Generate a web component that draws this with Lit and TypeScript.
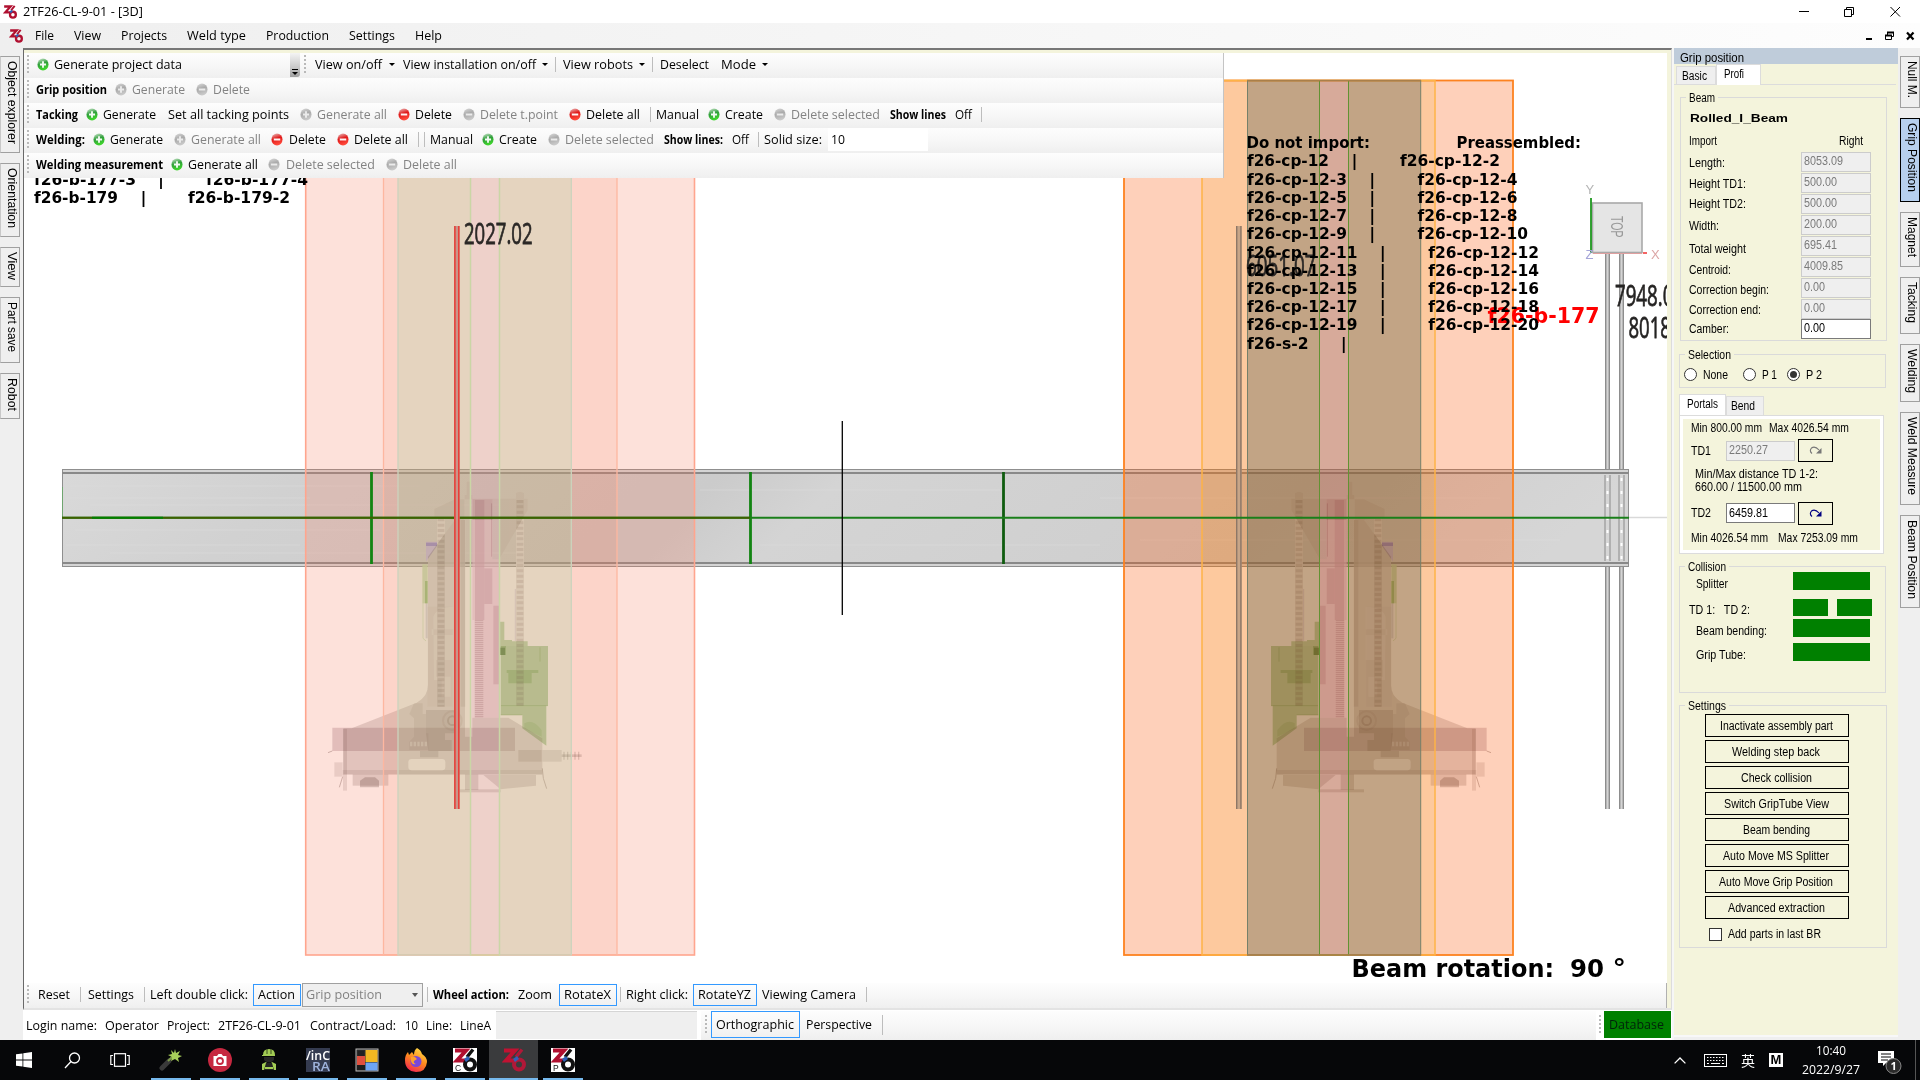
import { LitElement, html, css, svg, nothing } from "lit";
import { customElement, property } from "lit/decorators.js";
import { styleMap } from "lit/directives/style-map.js";

/* Text that is squeezed or stretched to an exact advance width. */
@customElement("fit-text")
class FitText extends LitElement {
  @property({ type: Number }) w = 0;
  @property({ type: Boolean, reflect: true }) vertical = false;
  static styles = css`
    :host { display: inline-block; white-space: pre; flex: none; }
    :host([vertical]) { writing-mode: vertical-rl; }
    .in { display: inline-block; transform-origin: 0 0; }
  `;
  firstUpdated() {
    const el = this.renderRoot.querySelector(".in") as HTMLElement;
    const r = el.getBoundingClientRect();
    const n = this.vertical ? r.height : r.width;
    if (!n || !this.w) return;
    const k = this.w / n;
    el.style.transform = this.vertical ? `scaleY(${k})` : `scaleX(${k})`;
    if (this.vertical) { this.style.height = this.w + "px"; }
    else { this.style.width = this.w + "px"; }
  }
  render() { return html`<span class="in"><slot></slot></span>`; }
}

const T = (s: string, w: number, c = "") => html`<fit-text class=${c} .w=${w}>${s}</fit-text>`;

/* kind, start, end, text */
type Item = [string, number, number, string?];

const ball = (kind: string) => {
  const id = "g" + kind;
  const plus = kind === "add" || kind === "addoff";
  const c = kind === "add" ? ["#d8ead8", "#2f9e3a", "#3fd52c"]
    : kind === "del" ? ["#e9c9c9", "#e01818", "#ff4a3c"]
    : ["#dcdcdc", "#aaaaaa", "#c9c9c9"];
  return html`<svg width="12" height="13" viewBox="0 0 13 13" preserveAspectRatio="none">
    <defs><linearGradient id=${id} x1="0" y1="0" x2="0.3" y2="1">
      <stop offset="0" stop-color=${c[0]}></stop><stop offset="0.5" stop-color=${c[1]}></stop><stop offset="1" stop-color=${c[2]}></stop>
    </linearGradient></defs>
    <circle cx="6.5" cy="6.5" r="6" fill="url(#${id})"></circle>
    <path d=${plus ? "M3.2 6.5H9.8M6.5 3.2V9.8" : "M3 6.5H10"} stroke="#fff" stroke-width="2" opacity=${kind.endsWith("off") ? 0.75 : 0.95}></path>
  </svg>`;
};

@customElement("tool-strip")
class ToolStrip extends LitElement {
  @property({ attribute: false }) items: Item[] = [];
  @property({ type: Number }) start = 24;
  static styles = css`
    :host { display: flex; align-items: center; flex: none; box-sizing: border-box; white-space: nowrap; padding-bottom: 2px;
      background: linear-gradient(#fdfdfd, #f7f7f7 50%, #efefef); }
    .it { flex: none; display: flex; align-items: center; height: 17px; line-height: 17px; }
    .bold { font-weight: 700; }
    .dim { color: #838383; }
    .sep { height: 15px; border-left: 1px solid #bdbdbd; box-sizing: border-box; }
    .dots { height: 19px; background: repeating-linear-gradient(#b9b9b9 0 2px, transparent 2px 4px); }
    .arr { height: 0; border: 3px solid transparent; border-top-color: #000; border-bottom: 0; box-sizing: border-box; }
    .box { height: 22px; border: 1px solid #3399ff; box-sizing: border-box; padding-left: 4px; }
    .combo { height: 24px; border: 1px solid #a0a0a0; background: #efefef; color: #838383; box-sizing: border-box; padding: 0 4px 0 3px; justify-content: space-between; }
    .caret { border: 3px solid transparent; border-top: 4px solid #555; border-bottom: 0; }
    .input { height: 23px; background: #fff; padding-left: 3px; box-sizing: border-box; }
    .more { align-self: stretch; height: auto; background: linear-gradient(#f4f4f4, #c8c8c8 60%, #a0a0a0); justify-content: center; align-items: flex-end; border-radius: 0 0 3px 0; margin-bottom: -1px; }
    :host(.tall) .box { height: 27px; }
    :host(.tall) .sep { height: 20px; }
  `;
  render() {
    let end = this.start;
    return this.items.map(([k, a, b, s]) => {
      const st = styleMap({ marginLeft: a - end + "px", width: b - a + "px" });
      end = b;
      const w = b - a;
      switch (k) {
        case "t": return html`<span class="it" style=${st}>${T(s!, w)}</span>`;
        case "b": return html`<span class="it bold" style=${st}>${T(s!, w)}</span>`;
        case "d": return html`<span class="it dim" style=${st}>${T(s!, w)}</span>`;
        case "box": return html`<span class="it box" style=${st}>${T(s!, w - 11)}</span>`;
        case "combo": return html`<span class="it combo" style=${st}>${T(s!, 76)}<i class="caret"></i></span>`;
        case "input": return html`<span class="it input" style=${st}>${T(s!, 14)}</span>`;
        case "more": return html`<span class="it more" style=${st}><svg width="8" height="9" viewBox="0 0 8 9"><path d="M1 1.5H7" stroke="#000"></path><path d="M1 4H7L4 7Z"></path></svg></span>`;
        case "add": case "addoff": case "del": case "deloff":
          return html`<span class="it" style=${st}>${ball(k)}</span>`;
        default: return html`<span class=${"it " + k} style=${st}></span>`;
      }
    });
  }
}

const ROWS: Item[][] = [
  [["dots", 27, 29], ["add", 37, 50], ["t", 54, 182, "Generate project data"], ["more", 290, 300], ["dots", 304, 306],
   ["t", 315, 382, "View on/off"], ["arr", 389, 395], ["t", 403, 536, "View installation on/off"], ["arr", 542, 548], ["sep", 555, 556],
   ["t", 563, 633, "View robots"], ["arr", 639, 645], ["sep", 652, 653], ["t", 660, 709, "Deselect"], ["t", 721, 756, "Mode"], ["arr", 762, 768]],
  [["dots", 27, 29], ["b", 36, 107, "Grip position"], ["addoff", 115, 128], ["d", 132, 185, "Generate"], ["deloff", 196, 209], ["d", 213, 250, "Delete"]],
  [["dots", 27, 29], ["b", 36, 78, "Tacking"], ["add", 86, 99], ["t", 103, 156, "Generate"], ["t", 168, 289, "Set all tacking points"],
   ["addoff", 300, 313], ["d", 317, 387, "Generate all"], ["del", 398, 411], ["t", 415, 452, "Delete"], ["deloff", 463, 476], ["d", 480, 558, "Delete t.point"],
   ["del", 569, 582], ["t", 586, 640, "Delete all"], ["sep", 650, 651], ["t", 656, 699, "Manual"], ["add", 708, 721], ["t", 725, 763, "Create"],
   ["deloff", 774, 787], ["d", 791, 880, "Delete selected"], ["b", 890, 946, "Show lines"], ["t", 955, 972, "Off"], ["sep", 981, 982]],
  [["dots", 27, 29], ["b", 36, 85, "Welding:"], ["add", 93, 106], ["t", 110, 163, "Generate"], ["addoff", 174, 187], ["d", 191, 261, "Generate all"],
   ["del", 271, 284], ["t", 289, 326, "Delete"], ["del", 337, 350], ["t", 354, 408, "Delete all"], ["sep", 418, 419], ["sep", 424, 425], ["t", 430, 473, "Manual"],
   ["add", 482, 495], ["t", 499, 537, "Create"], ["deloff", 548, 561], ["d", 565, 654, "Delete selected"], ["b", 664, 723, "Show lines:"], ["t", 732, 749, "Off"],
   ["sep", 758, 759], ["t", 764, 822, "Solid size:"], ["input", 828, 928, "10"]],
  [["dots", 27, 29], ["b", 36, 163, "Welding measurement"], ["add", 171, 184], ["t", 188, 258, "Generate all"], ["deloff", 268, 281], ["d", 286, 375, "Delete selected"],
   ["deloff", 386, 399], ["d", 403, 457, "Delete all"]],
];
const BOTTOM: Item[] = [["dots", 27, 29], ["t", 38, 70, "Reset"], ["sep", 80, 81], ["t", 88, 134, "Settings"], ["sep", 144, 145], ["t", 150, 248, "Left double click:"],
  ["box", 253, 301, "Action"], ["combo", 302, 423, "Grip position"], ["sep", 427, 428], ["b", 433, 509, "Wheel action:"], ["t", 518, 552, "Zoom"],
  ["box", 559, 617, "RotateX"], ["sep", 620, 621], ["t", 626, 688, "Right click:"], ["box", 693, 757, "RotateYZ"], ["t", 762, 856, "Viewing Camera"], ["sep", 866, 867]];
const MENU: Item[] = [["t", 35, 54, "File"], ["t", 74, 101, "View"], ["t", 121, 167, "Projects"], ["t", 187, 246, "Weld type"], ["t", 266, 329, "Production"], ["t", 349, 395, "Settings"], ["t", 415, 442, "Help"]];
const LOGIN: Item[] = [["t", 26, 97, "Login name:"], ["t", 105, 159, "Operator"], ["t", 167, 210, "Project:"], ["t", 218, 301, "2TF26-CL-9-01"], ["t", 310, 396, "Contract/Load:"], ["t", 405, 418, "10"], ["t", 426, 452, "Line:"], ["t", 460, 491, "LineA"]];
const PROJ: Item[] = [["dots", 705, 707], ["box", 711, 800, "Orthographic"], ["t", 806, 872, "Perspective"], ["sep", 882, 883]];

/* ---------- 3D scene ---------- */
const machine = (bolt: boolean) => svg`
  <g class="mul" fill="#d6d2d2">
    <path d="M433 207L495 178H523V240H495L433 230Z" opacity=".6"/>
    <path d="M530 125H541V165H547V178H524V165H530Z"/>
    <path d="M547 176H678V160Q690 150 702 160V176H713V210L628 357V240H547Z" opacity=".7"/>
    <path d="M495 240H525V1003H160V865H185L380 788Q414 770 414 735V350Z"/>
    <path d="M525 890H547V833H655L757 895V1003H525Z"/>
    <rect x="512" y="240" width="14" height="560" opacity=".6"/>
    <path d="M127 863H675V933H127Z" fill="#d6cad0"/>
    <path d="M133 967H158V1010H133Z" opacity=".7"/>
    <rect x="159" y="867" width="12" height="185" opacity=".7"/>
    <rect x="188" y="1003" width="107" height="34"/>
    <path d="M210 1042V1022L225 1012H255L267 1022V1042Z" fill="#c4c0c0"/>
    <path d="M158 990H757V1005H158Z" opacity=".6"/>
    <path d="M580 1005H738V1037L632 1048Z"/>
    <path d="M525 1003H565V1050H525Z"/>
    <rect x="495" y="1048" width="137" height="9"/>
    <path d="M408 810H510V880H465V900H485V933H445V952H390V933H415L408 880Z" fill="#d8d4d4"/>
    <path d="M372 790H398V822H408V880H415V930H358V905L372 890V835L358 822Z" opacity=".5"/>
    <rect x="412" y="500" width="76" height="300" opacity=".2"/>
  </g>
  <g fill="#8c8884" opacity=".22">
    <path d="M433 207L495 178H523V240H495L433 230Z"/>
    <path d="M530 125H541V165H547V178H524V165H530Z"/>
    <path d="M547 176H678V160Q690 150 702 160V176H713V210L628 357V240H547Z"/>
    <path d="M495 240H525V380H414V350Z"/>
  </g>
  <path d="M430 530Q440 500 490 500V568H425V585H490V660H438V710H482V770H455V720H432Z" fill="#fff" opacity=".25"/>
  <g class="mul" fill="#e4d2da">
    <path d="M547 178H607V358H628V833H547Z" opacity=".8"/>
    <rect x="555" y="180" width="28" height="360"/>
    <rect x="583" y="385" width="24" height="107"/>
    <rect x="610" y="497" width="18" height="236"/>
    <path d="M567 540V833" stroke="#d6c6ce" stroke-width="26" stroke-dasharray="4 2"/>
    <path d="M605 190V350" stroke="#ccb8c2" stroke-width="3"/>
  </g>
  <rect x="546" y="540" width="8" height="293" fill="#fff" opacity=".7"/>
  <g class="mul">
    <path d="M632 618H774V797H769V917L697 865V825H632Z" fill="#9fcb93"/>
    <path d="M630 545H643V600H666V604H713V618H648V645H630Z" fill="#a9d09d"/>
    <path d="M630 623H645V645H630Z" fill="#5aa04a"/>
    <path d="M650 690H745V699H725V730H655V699H650Z" fill="#b8dcac"/>
    <path d="M750 622V665M633 797H774M632 825H697" stroke="#c0dcb4" stroke-width="3"/>
    <path d="M703 850Q728 835 755 870V890L703 866Z" fill="#d9ebd2"/>
    <rect x="397" y="373" width="16" height="117" fill="#c3e0ae"/>
    <rect x="405" y="423" width="8" height="67" fill="#a5d28c"/>
    <path d="M399 490V595L408 603" stroke="#b9dca8" stroke-width="2" fill="none"/>
    <rect x="407" y="490" width="6" height="105" fill="#d3d3e0"/>
    <path d="M408 305H441V318L408 365Z" fill="#c0b4e8"/>
    <path d="M408 308H441V318H408Z" fill="#b0a2e8"/>
    <path d="M676 447V603" stroke="#c4b8d8" stroke-width="2"/>
  </g>
  <g fill="none" class="mul">
    <path d="M453 235V800M690 180V797" stroke="#e6e2e2" stroke-width="24"/>
    <path d="M453 235V800M690 180V797" stroke="#dedada" stroke-width="20" stroke-dasharray="9 7"/>
    <circle cx="487" cy="842" r="28" stroke="#ece8e8" stroke-width="6"/><circle cx="487" cy="842" r="13" stroke="#d0caca" stroke-width="6"/>
    <path d="M158 1010L148 1042M757 985L760 1015L770 1046M127 933L114 938" stroke="#a8a0a0" stroke-width="2.5"/>
  </g>
  <path d="M360 912H415" stroke="#fff" opacity=".35" stroke-width="14" stroke-dasharray="7 4"/>
  <rect x="355" y="957" width="111" height="34" rx="10" fill="#fff" opacity=".95"/>
  ${bolt ? svg`<g class="mul"><rect x="685" y="930" width="70" height="35" fill="#dcd8d8"/><rect x="757" y="930" width="58" height="35" fill="#ddd"/>
    <path d="M815 947H875" stroke="#ccc" stroke-width="8"/><path d="M820 947H875" stroke="#ccc" stroke-width="24" stroke-dasharray="4 7"/></g>` : nothing}
`;

const band = (x1: number, x2: number, fill: string, a: number, stroke: string, sw = 1.3) => svg`
  <rect x=${x1} y="80" width=${x2 - x1} height="875" fill=${fill} fill-opacity=${a}/>
  <rect x=${x1} y="80.5" width=${x2 - x1} height="874.5" fill="none" stroke=${stroke} stroke-width=${sw}/>`;

const st = (x1: number, x2: number, y: number, s: string, size = 15, fill = "#000") =>
  svg`<text x=${x1} y=${y} textLength=${x2 - x1} lengthAdjust="spacingAndGlyphs" font-size=${size} fill=${fill}>${s}</text>`;

const PARTS: [number, string, number, number, string, number, number][] = [
  [166.3, "f26-cp-12", 1329, 1354.5, "f26-cp-12-2", 1400, 1500],
  [185.3, "f26-cp-12-3", 1347, 1372.3, "f26-cp-12-4", 1417.5, 1517.5],
  [203.3, "f26-cp-12-5", 1347, 1372.3, "f26-cp-12-6", 1417.5, 1517.5],
  [221.3, "f26-cp-12-7", 1347, 1372.3, "f26-cp-12-8", 1417.5, 1517.5],
  [239.3, "f26-cp-12-9", 1347, 1372.3, "f26-cp-12-10", 1417.5, 1528],
  [257.5, "f26-cp-12-11", 1357.5, 1382.7, "f26-cp-12-12", 1428.3, 1539],
  [276.3, "f26-cp-12-13", 1357.5, 1382.7, "f26-cp-12-14", 1428.3, 1539],
  [294.3, "f26-cp-12-15", 1357.5, 1382.7, "f26-cp-12-16", 1428.3, 1539],
  [312.3, "f26-cp-12-17", 1357.5, 1382.7, "f26-cp-12-18", 1428.3, 1539],
  [330.3, "f26-cp-12-19", 1357.5, 1382.7, "f26-cp-12-20", 1428.3, 1539],
  [349.3, "f26-s-2", 1308.5, 1343.7, "", 0, 0],
];

const post = (x: number, y: number, w: number, fill: string, edge: string) => svg`
  <rect x=${x} y=${y} width=${w} height=${809 - y} fill=${fill}/>
  <path d="M${x + 0.7} ${y}V809M${x + w - 0.7} ${y}V809" stroke=${edge} stroke-width="1.4"/>`;

@customElement("scene-view")
class SceneView extends LitElement {
  static styles = css`
    :host { display: block; }
    svg { display: block; }
    text { white-space: pre; }
    .mul * { mix-blend-mode: multiply; }
    .mono { font-family: "DejaVu Sans", Verdana, sans-serif; font-weight: 700; }
    .dim { font-family: "Open Sans", "Noto Sans", sans-serif; stroke: #2b2826; stroke-width: 0.8; }
    .ax { font-family: "Liberation Sans", Arial, sans-serif; }
  `;
  render() {
    return html`<svg width="1643" height="930" viewBox="24 53 1643 930">
      <defs>
        <linearGradient id="web" x1="0" y1="0" x2="1" y2="0.06"><stop offset="0" stop-color="#d9d9d9"/><stop offset=".15" stop-color="#d1d1d1"/><stop offset=".42" stop-color="#cbcbcb"/><stop offset=".5" stop-color="#d4d4d4"/><stop offset=".8" stop-color="#cecece"/><stop offset="1" stop-color="#d6d6d6"/></linearGradient>
      </defs>
      <rect x="24" y="53" width="1643" height="930" fill="#fff"/>
      <path d="M1628 517.5H1667" stroke="#d9d9d9" stroke-width="1.3"/>
      ${post(1605, 253, 5, "#d4d4d4", "#8d8d8d")}${post(1619, 253, 5, "#d4d4d4", "#8d8d8d")}
      <rect x="62.5" y="469.5" width="1566" height="97" fill="#d4d4d4" stroke="#8f8f8f"/>
      <rect x="63" y="474" width="1565" height="88" fill="url(#web)"/>
      <path d="M70 486H420M66 498H310M90 505H500M75 530H380M66 545H300M110 553H520M700 490H1000M760 545H1100M1100 498H1500M1140 540H1560" stroke="#dcdcdc" stroke-width="1.5" opacity=".35"/>
      <path d="M62 473H1629M62 563H1629" stroke="#898989" stroke-width="2"/>
      <path d="M1605 475V561M1610 475V561M1619 475V561M1624 475V561" stroke="#8a8a8a"/>
      <path d="M1607.5 478V560M1621.5 478V560" stroke="#fff" stroke-width="2" stroke-dasharray="3 10"/>
      <g opacity=".85" transform="translate(290 440) scale(.33333)">${machine(true)}</g>
      <g opacity=".85" transform="translate(1529 440) scale(-.33333 .33333)">${machine(false)}</g>

      ${band(305.7, 694.5, "rgb(246,125,94)", 0.23, "#ffa58e", 1.6)}
      ${band(383.5, 617, "rgb(250,125,85)", 0.12, "#fdb7a0")}
      ${band(398, 470.5, "rgb(138,213,157)", 0.2, "#ccd3bd")}
      ${band(499.5, 571.3, "rgb(138,213,157)", 0.2, "#ccd3bd")}
      ${band(470.5, 499.5, "rgb(136,188,210)", 0.12, "#cbd6a5")}

      ${band(1124, 1513, "rgb(251,81,0)", 0.27, "#fd8220", 1.8)}
      ${band(1202, 1435, "rgb(250,161,0)", 0.15, "#feb347", 1.5)}
      ${band(1247.5, 1319.5, "rgb(61,81,75)", 0.3, "#76806a", 1)}
      ${band(1348.5, 1420.7, "rgb(61,81,75)", 0.3, "#76806a", 1)}
      ${band(1319.5, 1348.5, "rgb(64,51,140)", 0.2, "#629232", 1)}
      <path d="M1247 80.5H1421M1247 955H1421" stroke="#a97f4a" stroke-width="1.4"/>
      ${post(1236, 226, 5.6, "#c7a588", "#8d7767")}

      <path d="M371.5 472V564M750.5 472V564" stroke="#128412" stroke-width="2.8"/>
      <path d="M1003.5 472V564" stroke="#0f5c0f" stroke-width="2.8"/>
      <path d="M62.5 487V518" stroke="#6fa56f" stroke-width="1"/>
      <path d="M62 517.8H1629" stroke="#1a7f1a" stroke-width="2"/>
      <path d="M62 517.8H750" stroke="#3f6000" stroke-width="2"/>
      <path d="M92 517.8H163" stroke="#008000" stroke-width="2"/>
      <path d="M842.3 421V615" stroke="#000" stroke-width="1.3"/>
      <rect x="454" y="226" width="5.6" height="583" fill="#c9958a"/>
      <path d="M454.9 226V809M458.8 226V809" stroke="#e83c36" stroke-width="1.5"/>

      <g class="dim">
        ${st(464, 532.5, 244, "2027.02", 28.5, "#2b2826")}
        ${st(1246, 1315.5, 276, "6051.07", 28.5, "#2b2826")}
        ${st(1615, 1684, 306, "7948.02", 28.5, "#222")}
        ${st(1628.5, 1697, 337.5, "8018.09", 28.5, "#222")}
      </g>
      <g class="mono">
        ${st(1487.5, 1599.5, 323, "f26-b-177", 21, "#f00")}
        ${st(34, 136, 185, "f26-b-177-3")}${st(158, 164, 185, "|")}${st(206, 308, 185, "f26-b-177-4")}
        ${st(34, 118, 203, "f26-b-179")}${st(140.5, 146.5, 203, "|")}${st(188, 290, 203, "f26-b-179-2")}
        ${st(1246.5, 1370, 148, "Do not import:")}${st(1456.5, 1581, 148, "Preassembled:")}
        ${PARTS.map(([y, a, ax, p, b, b1, b2]) => svg`${st(1247, ax, y, a)}${st(p - 3, p + 3, y, "|")}${b ? st(b1, b2, y, b) : nothing}`)}
        ${st(1351.5, 1554, 977, "Beam rotation:", 25)}${st(1570, 1604, 977, "90", 25)}${st(1612.5, 1626, 977, "°", 25)}
      </g>
      <g class="ax">
        <rect x="1592.5" y="203" width="49.5" height="49.5" fill="#e5e5e5" stroke="#a9a9a9" stroke-width="1.6"/>
        <path d="M1591 198V253" stroke="#008a00" stroke-width="1.6"/>
        <path d="M1593 253.5H1642" stroke="#e0a0a0"/>
        <path d="M1643 253H1647" stroke="#f03030" stroke-width="1.5"/>
        <text transform="translate(1610.5 216) rotate(90)" font-size="17" fill="#999" textLength="21.5" lengthAdjust="spacingAndGlyphs">TOP</text>
        <text x="1585.5" y="193.5" font-size="13" fill="#b5b5b5">Y</text>
        <text x="1585.5" y="258.5" font-size="13" fill="#a5a5d8">Z</text>
        <text x="1651" y="258.5" font-size="13" fill="#dba5a5">X</text>
      </g>
    </svg>`;
  }
}

/* ---------- right docked panel ---------- */
const FIELDS: [string, number, string, number, number, boolean?][] = [
  ["Length:", 36, "8053.09", 39, 1], ["Height TD1:", 57, "500.00", 33, 1], ["Height TD2:", 57, "500.00", 33, 0], ["Width:", 30, "200.00", 33, 1],
  ["Total weight", 57, "695.41", 33, 3], ["Centroid:", 42, "4009.85", 39, 3], ["Correction begin:", 80, "0.00", 21, 2], ["Correction end:", 72, "0.00", 21, 1], ["Camber:", 40, "0.00", 21, 0, true],
];
const BUTTONS: [string, number][] = [["Inactivate assembly part", 113], ["Welding step back", 88], ["Check collision", 71], ["Switch GripTube View", 105], ["Beam bending", 67], ["Auto Move MS Splitter", 106], ["Auto Move Grip Position", 114], ["Advanced extraction", 97]];

@customElement("grip-panel")
class GripPanel extends LitElement {
  static styles = css`
    :host { display: flex; flex-direction: column; width: 224px; height: 989px; background: #f4f4dc; box-sizing: border-box;
      font: 12px/14px "Liberation Sans", Arial, sans-serif; color: #000; border-bottom: 2px solid #f8f8f8; }
    .head { height: 16px; background: #bfccda; padding: 3px 0 0 6px; box-sizing: border-box; flex: none; }
    .tabs { display: flex; align-items: flex-end; height: 20px; border-bottom: 1px solid #dcdcdc; flex: none; margin-right: 2px; padding-left: 2px; }
    .tab { background: #efefef; border: 1px solid #dcdcdc; border-bottom: 0; box-sizing: border-box; display: flex; align-items: center; }
    .basic { width: 40px; height: 18px; padding: 1px 0 0 5px; }
    .profi { width: 45px; padding-left: 7px; background: #fff; margin-bottom: -1px; height: 21px; padding-bottom: 2px; }
    .group { border: 1px solid #dadada; box-sizing: border-box; flex: none; margin-left: 5px; }
    .legend { height: 14px; margin: -7.5px 0 0 5px; padding: 0 3px; background: #f4f4dc; width: max-content; }
    .beam { margin: 12px 0 0 6px; width: 207px; height: 244px; }
    .name { font-weight: 700; font-size: 11px; height: 14px; margin: 6px 0 0 9px; }
    .row { display: flex; }
    .between { justify-content: space-between; margin: 9px 23px 4px 8px; height: 14px; }
    .field { display: flex; justify-content: space-between; align-items: center; height: 20.95px; padding: 0 15px 0 8px; }
    .inp { width: 70px; height: 20px; border: 1px solid #cccccc; background: #efefef; color: #7a7a7a; box-sizing: border-box; display: flex; align-items: center; padding: 0 0 2px 2px; flex: none; }
    .on { background: #fff; color: #000; border-color: #7a7a7a; }
    .sel { margin-top: 13px; width: 207px; height: 34px; }
    .radios { display: flex; align-items: center; height: 14px; margin: 6px 0 0 4px; }
    .radio { width: 13px; height: 13px; border: 1px solid #333; border-radius: 50%; background: #fff; box-sizing: border-box; display: flex; align-items: center; justify-content: center; margin-right: 6px; }
    .radio.c::after { content: ""; width: 7px; height: 7px; border-radius: 50%; background: #333; }
    .r1 { margin-left: 15px; } .r2 { margin-left: 10px; }
    .ptabs { display: flex; align-items: flex-end; height: 21px; margin: 6px 0 0 5px; flex: none; }
    .portals { width: 47px; height: 21px; background: #fff; padding: 0 0 2px 7px; }
    .bend { width: 38px; height: 19px; padding-left: 4px; }
    .pane { margin-left: 5px; width: 205px; height: 139px; background: #f4f4dc; box-sizing: border-box; border: 1px solid #dcdcdc; box-shadow: inset 0 0 0 3px #fff; padding: 5px 0 0 11px; flex: none; }
    .line { display: flex; height: 14px; gap: 7px; }
    .td { display: flex; align-items: center; height: 23px; margin-top: 4px; }
    .td .inp { width: 69px; margin-left: 15px; margin-right: 3px; padding-bottom: 1px; }
    .go { width: 35px; height: 23px; border: 1px solid #000; box-sizing: border-box; display: flex; align-items: center; justify-content: center; }
    .dist { margin: 6px 0 0 4px; line-height: 13px; height: 26px; display: flex; flex-direction: column; }
    .td.two { margin-top: 7.5px; } .line.last { margin-top: 6.5px; gap: 10px; }
    .coll { margin-top: 12px; width: 207px; height: 127px; }
    .crow { display: flex; justify-content: space-between; padding-right: 15px; height: 18px; align-items: center; }
    .crow .lamp { width: 77px; height: 18px; background: #008000; }
    .crow .half { width: 35px; height: 17px; }
    .c1 { margin: -1.5px 0 8px; padding-left: 16px; } .c2 { padding: 0 13px 0 9px; margin-bottom: 3px; } .c3 { padding-left: 16px; margin-bottom: 6px; } .c4 { padding-left: 16px; }
    .halves { gap: 9px; }
    .crow fit-text { margin-top: 5px; }
    .sett { margin-top: 12px; width: 208px; height: 243px; }
    .btns { display: flex; flex-direction: column; gap: 3px; margin: 1.5px 0 0 25px; }
    .btn { width: 144px; height: 23px; border: 1px solid #000; box-sizing: border-box; display: flex; align-items: center; justify-content: center; padding: 1px 2px 0 0; }
    .chk { display: flex; align-items: center; gap: 6px; margin: 8px 0 0 29px; }
    .cb { width: 13px; height: 13px; border: 1px solid #333; background: #fff; box-sizing: border-box; }
  `;
  private go(c: string) {
    return html`<span class="go"><svg width="14" height="9" viewBox="0 0 14 9"><path d="M3 7.5Q0 5 2.5 2Q6 -.5 10 4" fill="none" stroke=${c} stroke-width="1.1"></path><path d="M12.5 2V7.5H7Z" fill=${c}></path></svg></span>`;
  }
  render() {
    return html`
      <div class="head">${T("Grip position", 64)}</div>
      <div class="tabs"><span class="tab basic">${T("Basic", 25)}</span><span class="tab profi">${T("Profi", 20)}</span></div>
      <div class="group beam"><div class="legend">${T("Beam", 26)}</div>
        <div class="name">${T("Rolled_I_Beam", 98)}</div>
        <div class="row between">${T("Import", 28)}${T("Right", 24)}</div>
        ${FIELDS.map(([l, w, v, vw, dy, on]) => html`<div class="field"><span style=${styleMap({ paddingTop: Math.max(0, dy * 2) + "px" })}>${T(l, w)}</span><span class=${"inp" + (on ? " on" : "")}>${T(v, vw)}</span></div>`)}
      </div>
      <div class="group sel"><div class="legend">${T("Selection", 43)}</div>
        <div class="radios"><i class="radio"></i>${T("None", 25)}<i class="radio r1"></i>${T("P 1", 15)}<i class="radio r2 c"></i>${T("P 2", 16)}</div>
      </div>
      <div class="ptabs"><span class="tab portals">${T("Portals", 31)}</span><span class="tab bend">${T("Bend", 24)}</span></div>
      <div class="pane">
        <div class="line">${T("Min 800.00 mm", 71)}${T("Max 4026.54 mm", 80)}</div>
        <div class="td">${T("TD1", 20)}<span class="inp">${T("2250.27", 39)}</span>${this.go("#777")}</div>
        <div class="dist">${T("Min/Max distance TD 1-2:", 123)}${T("660.00 / 11500.00 mm", 107)}</div>
        <div class="td two">${T("TD2", 20)}<span class="inp on">${T("6459.81", 39)}</span>${this.go("#000080")}</div>
        <div class="line last">${T("Min 4026.54 mm", 77)}${T("Max 7253.09 mm", 80)}</div>
      </div>
      <div class="group coll"><div class="legend">${T("Collision", 38)}</div>
        <div class="crow c1">${T("Splitter", 32)}<i class="lamp"></i></div>
        <div class="crow c2">${T("TD 1:   TD 2:", 61)}<span class="row halves"><i class="lamp half"></i><i class="lamp half"></i></span></div>
        <div class="crow c3">${T("Beam bending:", 71)}<i class="lamp"></i></div>
        <div class="crow c4">${T("Grip Tube:", 50)}<i class="lamp"></i></div>
      </div>
      <div class="group sett"><div class="legend">${T("Settings", 38)}</div>
        <div class="btns">${BUTTONS.map(([s, w]) => html`<span class="btn">${T(s, w)}</span>`)}</div>
        <div class="chk"><i class="cb"></i>${T("Add parts in last BR", 93)}</div>
      </div>`;
  }
}

/* ---------- Z6 logo ---------- */
const z6 = (size: number, z: string, six: string, tag = "") => svg`<svg width=${size} height=${size} viewBox="0 0 24 24">
  ${tag ? svg`<rect width="24" height="24" fill="#fff"/>` : nothing}
  <path d="M2 2.5H13L4 12.500H13" fill="none" stroke=${z} stroke-width="4"/>
  <path d="M14 9L20 1.500" stroke=${six} stroke-width="3.400"/>
  <circle cx="17" cy="16.500" r="5" fill="none" stroke=${six} stroke-width="4"/>
  <path d="M11 11L15 8L17 11L13 14Z" fill="#2f62b8"/>
  ${tag ? svg`<text x="2" y="22.5" font-size="8.5" font-family="Liberation Sans" fill="#111">${tag}</text>` : nothing}
</svg>`;

@customElement("task-bar")
class TaskBar extends LitElement {
  static styles = css`
    :host { display: flex; height: 40px; background: #060709; color: #fff; font: 12px/16px "Open Sans", "Noto Sans", sans-serif; flex: none; }
    .sys { width: 49px; display: flex; align-items: center; justify-content: center; }
    .start { width: 48px; }
    .view { width: 46px; }
    .app { width: 49px; display: flex; flex-direction: column; align-items: center; justify-content: space-between; padding-top: 8px; box-sizing: border-box; }
    .app.first { margin-left: 3px; }
    .app.on { background: #3a3b3d; }
    .app::after { content: ""; width: 40px; height: 2px; background: #76b9ed; }
    .app.on::after { width: 49px; }
    .tray { margin-left: auto; display: flex; align-items: center; }
    .kb { margin-left: 18px; } .ime { font: 14px/16px "Noto Sans CJK SC", sans-serif; margin-left: 14px; width: 14px; }
    .m { width: 14px; height: 14px; background: #fff; color: #000; font: 700 13px/14px "Liberation Sans", sans-serif; text-align: center; margin-left: 14px; }
    .clock { display: flex; flex-direction: column; align-items: center; gap: 3px; margin-left: 18px; width: 60px; }
    .note { margin: 5px 11px 0 17px; }
    .desk { width: 4px; height: 40px; border-left: 1px solid #555; margin-left: 1px; }
    svg { display: block; }
  `;
  render() {
    const icons = [
      html`<svg width="24" height="24" viewBox="0 0 24 24"><path d="M3 20L10 13" stroke="#3a3a3a" stroke-width="5" stroke-linecap="round"/><path d="M9 13L14 8" stroke="#7d9a4a" stroke-width="2"/><path d="M16 1L17 5L21 3L19 7L23 8L19 10L20 14L16 11L12 13L13 9L9 7L13 6L12 2L15 5Z" fill="#a8cf5a"/></svg>`,
      html`<svg width="24" height="24" viewBox="0 0 24 24"><circle cx="12" cy="12" r="12" fill="#c62840"/><path d="M5.5 8H9L10.500 6H13.500L15 8H18.500V18H5.500Z" fill="#fff"/><circle cx="12" cy="13" r="3" fill="none" stroke="#c62840" stroke-width="1.8"/></svg>`,
      html`<svg width="24" height="24" viewBox="0 0 24 24"><path d="M6 7Q6 1 12 1Q18 1 18 7V8H5V7Z" fill="#a3cc55"/><path d="M10 1V6M14 1V6" stroke="#3d5020"/><path d="M7 9H17V12Q12 17 7 12Z" fill="#262626"/><path d="M5 16L9 14L12 18L15 14L19 16V22H5Z" fill="#a3cc55"/><path d="M7 22L9 15H15L17 22Z" fill="#222"/><path d="M8 20H16" stroke="#a3cc55" stroke-width="2"/></svg>`,
      html`<svg width="24" height="24" viewBox="0 0 24 24"><rect width="24" height="24" fill="#343b50"/><g font-family="Open Sans" font-weight="600"><text x="0" y="11.500" font-size="13" fill="#fff" textLength="24" lengthAdjust="spacingAndGlyphs">/inC</text><text x="6" y="23" font-size="13" fill="#9fb3dc" textLength="18" lengthAdjust="spacingAndGlyphs">RA</text></g></svg>`,
      html`<svg width="24" height="24" viewBox="0 0 24 24"><rect x="1" y="1" width="22" height="22" fill="#2b2b2b" stroke="#bbb"/><rect x="3" y="3" width="6" height="6" fill="#222"/><rect x="2" y="8" width="8" height="9" fill="#e05040"/><rect x="10.500" y="2" width="12" height="12" fill="#f2b822"/><rect x="10.500" y="14.500" width="12" height="8" fill="#6da5f5"/><rect x="2" y="17" width="8" height="5" fill="#1d1d1d"/></svg>`,
      html`<svg width="24" height="24" viewBox="0 0 24 24"><defs><linearGradient id="fx" x1=".8" y1="0" x2=".3" y2="1"><stop offset="0" stop-color="#ffe34a"/><stop offset=".5" stop-color="#ff8a1e"/><stop offset="1" stop-color="#f2264f"/></linearGradient></defs><path d="M13 0Q17 2 18 6Q23 9 23 14Q22 24 12 24Q1 23 1 12Q1 7 4 4L5 7L8 4L10 7Q10 2 13 0Z" fill="url(#fx)"/><circle cx="12" cy="13.500" r="5.500" fill="#7a47d8"/><path d="M7 9Q11 8 13 11L10 13Q9 15 12 16Q7 17 7 12Z" fill="#ffa02c"/></svg>`,
      html`<svg width="24" height="24">${z6(24, "#b01030", "#111", "C")}</svg>`,
      html`<svg width="24" height="24">${z6(24, "#c01232", "#b01838")}</svg>`,
      html`<svg width="24" height="24">${z6(24, "#b01030", "#111", "P")}</svg>`,
    ];
    return html`
      <span class="sys start"><svg width="16" height="16" viewBox="0 0 16 16" fill="#fff"><path d="M0 2.300L6.500 1.400V7.600H0ZM7.300 1.300L16 0V7.600H7.300ZM0 8.400H6.500V14.600L0 13.700ZM7.300 8.400H16V16L7.300 14.700Z"/></svg></span>
      <span class="sys"><svg width="17" height="17" viewBox="0 0 17 17" fill="none" stroke="#fff" stroke-width="1.300"><circle cx="10.500" cy="6" r="5"/><path d="M7 9.500L1 16"/></svg></span>
      <span class="sys view"><svg width="20" height="14" viewBox="0 0 20 14" fill="none" stroke="#fff" stroke-width="1.200"><rect x="4.500" y=".7" width="11" height="12.600"/><path d="M3 2.500H.8V11.500H3M17 2.500H19.200V11.500H17"/></svg></span>
      ${icons.map((i, n) => html`<span class=${"app" + (n === 0 ? " first" : n === 7 ? " on" : "")}>${i}</span>`)}
      <span class="tray">
        <svg width="12" height="7" viewBox="0 0 12 7"><path d="M.6 6.400L6 1L11.400 6.400" fill="none" stroke="#fff" stroke-width="1.300"/></svg>
        <svg class="kb" width="23" height="13" viewBox="0 0 23 13" fill="none" stroke="#fff"><rect x=".5" y=".5" width="22" height="12"/><path d="M3 3.500H20M3 6.500H20" stroke-dasharray="1.500 1.500"/><path d="M3 9.500H5M7 9.500H16M18 9.500H20"/></svg>
        <span class="ime">英</span><span class="m">M</span>
        <span class="clock">${T("10:40", 30)}${T("2022/9/27", 58)}</span>
        <svg class="note" width="25" height="25" viewBox="0 0 25 25"><path d="M0 1H16V13H8L5 16V13H0Z" fill="#fff"/><path d="M3 4H13M3 7H13M3 10H10" stroke="#060709"/><circle cx="15.500" cy="16" r="7.500" fill="#2b2b2b" stroke="#888"/><text x="12.500" y="20" font-size="11" font-weight="700" fill="#fff">1</text></svg>
        <i class="desk"></i>
      </span>`;
  }
}

/* tab label, tab length, text length */
const LEFT: [string, number, number][] = [["Object explorer", 97, 83], ["Orientation", 74, 60], ["View", 40, 28], ["Part save", 66, 50], ["Robot", 46, 33]];
const RIGHT: [string, number, number][] = [["Null M.", 52, 37], ["Grip Position", 84, 69], ["Magnet", 55, 40], ["Tacking", 57, 41], ["Welding", 58, 44], ["Weld Measure", 93, 78], ["Beam Position", 93, 79]];

@customElement("app-root")
class AppRoot extends LitElement {
  static styles = css`
    :host { display: flex; flex-direction: column; width: 1920px; height: 1080px; overflow: hidden; background: #efefef; color: #000;
      font: 12px/17px "Open Sans", "Noto Sans", "Segoe UI", sans-serif; }
    i { font-style: normal; }
    .title { height: 23px; background: #fff; display: flex; align-items: center; padding-left: 3px; gap: 5px; flex: none; }
    .win { margin-left: auto; margin-right: 19px; }
    .menu { height: 25px; display: flex; align-items: center; background: linear-gradient(90deg, #efefef, #fdfdfd); flex: none; padding-left: 9px; }
    .menu tool-strip { background: none; padding-bottom: 0; }
    .mdi { margin: 0 5px 0 auto; }
    .main { display: flex; height: 992px; flex: none; }
    .tabsL, .tabsR { display: flex; flex-direction: column; gap: 10px; padding-top: 8px; box-sizing: border-box; font: 12px/14px "Liberation Sans", Arial, sans-serif; }
    .tabsL { width: 23px; } .tabsR { width: 22px; padding-left: 2px; }
    .vt { width: 20px; border: 1px solid #a0a0a0; background: #efefef; box-sizing: border-box; padding: 4px 0 0 4px; flex: none; }
    .tabsL .vt { border-left-color: #c8c8c8; padding-left: 4px; }
    .vt.act { background: #b7d0ee; border-color: #000; }
    .vt fit-text { display: block; }
    .center { width: 1651px; flex: none; display: flex; flex-direction: column; background: #efefef; border-right: 2px solid #f6f6f6; box-sizing: border-box; }
    .frame { height: 962px; box-sizing: border-box; border: 1px solid #696969; border-top: 2px solid #777; border-right-color: #dcdcdc; border-bottom: 2px solid #e3e3e3; background: #f4f4dc; padding: 3px 0 0; display: flex; flex-direction: column; }
    .view { position: relative; height: 930px; flex: none; width: 1643px; }
    .over { position: absolute; left: 0; top: 0; width: 1200px; }
    .over tool-strip { height: 25px; border-right: 1px solid #c4c4c4; }
    .bottom { height: 25px; width: 1643px; border-right: 1px solid #b0b0b0; }
    .status { flex: 1; display: flex; padding-top: 1px; background: #fff; }
    .login { width: 473px; height: 29px; background: #fff; padding-bottom: 0; }
    .mid { width: 201px; flex: none; background: #efefef; border-top: 1px solid #d5d5d5; box-sizing: border-box; height: 28px; }
    .proj { width: 895px; height: 29px; margin-left: 4px; padding-bottom: 2px; }
    .db { background: #008000; height: 27px; width: 67px; flex: none; box-sizing: border-box; padding: 5px 0 0 5px; margin-left: 3px; color: #00230a; }
    .dots { width: 2px; height: 20px; flex: none; margin: 4px 0 0 3px; background: repeating-linear-gradient(#b9b9b9 0 2px, transparent 2px 4px); }
  `;
  private strip(items: Item[], start: number, cls = "") {
    return html`<tool-strip class=${cls} .items=${items} .start=${start}></tool-strip>`;
  }
  render() {
    return html`
      <div class="title"><svg width="15" height="14">${z6(14, "#b01030", "#b01030")}</svg>${T("2TF26-CL-9-01 - [3D]", 120)}
        <svg class="win" width="102" height="12" viewBox="0 0 102 12" fill="none" stroke="#000"><path d="M0 5.500H10"/><path d="M45.500 3.500H52.500V10.500H45.500ZM47.500 3V1.500H54.500V8.500H53"/><path d="M91.500 1L101 10.500M101 1L91.500 10.500"/></svg>
      </div>
      <div class="menu"><svg width="14" height="14">${z6(14, "#b01030", "#b01030")}</svg>${this.strip(MENU, 23)}
        <svg class="mdi" width="49" height="10" viewBox="0 0 49 10" fill="none" stroke="#000"><path d="M0 8H6" stroke-width="2"/><path d="M19.500 4.500H25.500V8.500H19.500ZM21.500 4V1.500H27.500V5.500H26" /><path d="M19 4.500H26M21 1.500H28" stroke-width="2"/><path d="M41 1.500L47.500 8.500M47.500 1.500L41 8.500" stroke-width="2.200"/></svg>
      </div>
      <div class="main">
        <div class="tabsL">${LEFT.map(([s, h, w]) => html`<span class="vt" style=${styleMap({ height: h + "px" })}><fit-text vertical .w=${w}>${s}</fit-text></span>`)}</div>
        <div class="center">
          <div class="frame">
            <div class="view"><scene-view></scene-view>
              <div class="over">${ROWS.map((r) => this.strip(r, 24))}</div>
            </div>
            ${this.strip(BOTTOM, 24, "bottom")}
          </div>
          <div class="status">
            ${this.strip(LOGIN, 23, "login")}
            <div class="mid"></div>
            ${this.strip(PROJ, 701, "proj tall")}
            <i class="dots"></i><span class="db">${T("Database", 55)}</span>
          </div>
        </div>
        <grip-panel></grip-panel>
        <div class="tabsR">${RIGHT.map(([s, h, w]) => html`<span class=${"vt" + (s === "Grip Position" ? " act" : "")} style=${styleMap({ height: h + "px" })}><fit-text vertical .w=${w}>${s}</fit-text></span>`)}</div>
      </div>
      <task-bar></task-bar>`;
  }
}
